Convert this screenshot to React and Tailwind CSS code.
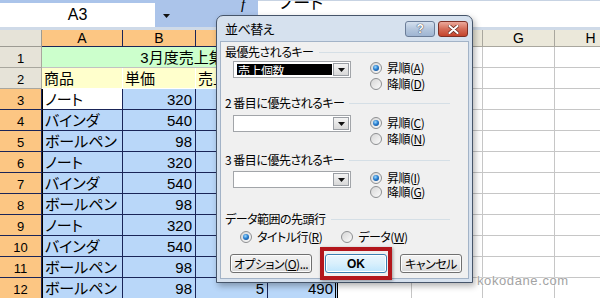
import React from "react";

const COLS = "grid-cols-[42px_81px_73px_72px_70px_74px_71px_72px_72px]";

const rows = [
    ["ノート", 320, 10],
    ["バインダ", 540, 5],
    ["ボールペン", 98, 20],
    ["ノート", 320, 8],
    ["バインダ", 540, 3],
    ["ボールペン", 98, 15],
    ["ノート", 320, 12],
    ["バインダ", 540, 6],
    ["ボールペン", 98, 10],
    ["ボールペン", 98, 5],
];

function Radio({ checked }) {
    return (
        <span className="relative inline-block w-[12px] h-[12px] shrink-0 rounded-full border border-[#8d8f91] bg-gradient-to-br from-[#d6d6d6] to-[#fbfbfb]">
            {checked && (
                <span className="absolute left-[2px] top-[2px] w-[6px] h-[6px] rounded-full bg-[radial-gradient(circle_at_40%_35%,#9fdcff_0%,#2a7fd0_45%,#0c3f80_100%)]" />
            )}
        </span>
    );
}

function RadioItem({ checked, label, hot, className = "" }) {
    return (
        <div className={`flex items-center gap-[5px] ${className}`}>
            <Radio checked={checked} />
            <span className="text-[12px] leading-[14px] whitespace-nowrap">
                {label}(<span className="underline">{hot}</span>)
            </span>
        </div>
    );
}

function Legend({ children, className = "" }) {
    return (
        <div className={`flex items-center h-[16px] mr-[18px] pl-[4px] ${className}`}>
            <span className="text-[12px] leading-[16px] whitespace-nowrap">{children}</span>
            <div className="flex-1 h-px bg-[#d5dfe6] ml-[5px]" />
        </div>
    );
}

function Combo({ value, className = "" }) {
    return (
        <div className={`flex w-[118px] h-[17px] border border-[#a2a5a9] bg-white p-px ${className}`}>
            <div className="flex-1 pl-[2px] pr-[1px] py-px">
                {value && (
                    <div className="h-full bg-black text-white text-[12px] leading-[13px] pl-px">
                        {value}
                    </div>
                )}
            </div>
            <div className="w-[16px] h-full flex items-center justify-center border border-[#9a9ea4] bg-gradient-to-b from-[#f4f4f4] to-[#d8d8d8]">
                <svg width="7" height="4" viewBox="0 0 7 4">
                    <polygon points="0,0 7,0 3.5,4" fill="#111" />
                </svg>
            </div>
        </div>
    );
}

function Btn({ children, primary, className = "" }) {
    return (
        <div
            className={`flex items-center justify-center h-[19px] rounded-[3px] border text-[12px] leading-[14px] ${
                primary
                    ? "border-[#3c7fb1] bg-gradient-to-b from-[#eaf6fd] via-[#d9f0fc] to-[#bee6fd] shadow-[inset_0_0_0_1px_#fff]"
                    : "border-[#707070] bg-gradient-to-b from-[#f2f2f2] via-[#ebebeb] to-[#d6d6d6] shadow-[inset_0_0_0_1px_#fcfcfc]"
            } ${className}`}
        >
            {children}
        </div>
    );
}

function SortDialog() {
    return (
        <div className="absolute left-[216px] top-[15px] w-[257px] h-[268px] flex flex-col rounded-t-[7px] border border-[#46556a] bg-[#d6e1ee] px-[3px] pb-[3px] shadow-[2px_3px_6px_rgba(0,0,0,0.3)] font-['Noto_Sans_CJK_JP',sans-serif] [font-feature-settings:'palt'] tracking-[-0.5px] text-black">
            {/* title bar */}
            <div className="h-[25px] flex items-start shrink-0">
                <span className="mt-[5px] ml-[5px] text-[13px] leading-[16px]">並べ替え</span>
                <div className="ml-auto mr-[1px] mt-[5px] flex gap-[3px]">
                    <div className="w-[30px] h-[16px] rounded-[3px] border border-[#6b7d98] bg-gradient-to-b from-[#d4e0ee] via-[#b4c6dd] to-[#9fb5d2] flex items-center justify-center">
                        <span className="text-white font-bold text-[12px] leading-[12px] font-['Liberation_Sans',sans-serif] [text-shadow:0_0_1px_#334,0_0_1px_#334]">?</span>
                    </div>
                    <div className="w-[30px] h-[16px] rounded-[3px] border border-[#7d3026] bg-gradient-to-b from-[#eba99b] via-[#d46c58] to-[#c4432b] flex items-center justify-center">
                        <svg width="11" height="9" viewBox="0 0 11 9">
                            <path d="M1.5 1 L9.5 8 M9.5 1 L1.5 8" stroke="#5a1d14" strokeWidth="3.4" strokeLinecap="round" />
                            <path d="M1.5 1 L9.5 8 M9.5 1 L1.5 8" stroke="#fff" strokeWidth="2.2" strokeLinecap="round" />
                        </svg>
                    </div>
                </div>
            </div>

            {/* body */}
            <div className="flex-1 border border-[#a3b3c7] bg-[#f0f0f0] pt-[2px]">
                <Legend>最優先されるキー</Legend>
                <div className="flex">
                    <Combo value="売上個数" className="ml-[12px] mt-px" />
                    <div className="ml-[19px] flex flex-col">
                        <RadioItem checked label="昇順" hot="A" className="h-[16px]" />
                        <RadioItem label="降順" hot="D" className="h-[16px]" />
                    </div>
                </div>

                <Legend className="mt-[3px]">2 番目に優先されるキー</Legend>
                <div className="flex mt-[4px]">
                    <Combo className="ml-[12px]" />
                    <div className="ml-[19px] flex flex-col">
                        <RadioItem checked label="昇順" hot="C" className="h-[16px]" />
                        <RadioItem label="降順" hot="N" className="h-[16px]" />
                    </div>
                </div>

                <Legend className="mt-[5px]">3 番目に優先されるキー</Legend>
                <div className="flex mt-[3px]">
                    <Combo className="ml-[12px]" />
                    <div className="ml-[19px] flex flex-col">
                        <RadioItem checked label="昇順" hot="I" className="h-[14px]" />
                        <RadioItem label="降順" hot="G" className="h-[14px]" />
                    </div>
                </div>

                <Legend className="mt-[12px]">データ範囲の先頭行</Legend>
                <div className="flex h-[16px] mt-[2px] pl-[19px]">
                    <RadioItem checked label="タイトル行" hot="R" />
                    <RadioItem label="データ" hot="W" className="ml-[19px]" />
                </div>

                <div className="flex mt-[9px] pl-[9px]">
                    <Btn className="w-[82px]">
                        オプション(<span className="underline">O</span>)...
                    </Btn>
                    <Btn primary className="w-[62px] ml-[13px] font-['Liberation_Sans',sans-serif] font-semibold tracking-normal">
                        OK
                    </Btn>
                    <Btn className="w-[62px] ml-[13px]">キャンセル</Btn>
                </div>
            </div>

            {/* annotation box around OK */}
            <div className="absolute left-[103px] top-[231px] w-[72px] h-[33px] border-[4px] border-[#b3161c] shadow-[1px_1px_3px_rgba(0,0,0,0.35)]" />
        </div>
    );
}

export default function App() {
    const navy = "border-[#1a2558]";
    return (
        <div className="relative w-[600px] h-[298px] overflow-hidden bg-white font-['Liberation_Sans','Noto_Sans_CJK_JP',sans-serif] text-black">
            {/* formula bar */}
            <div className="flex h-[27px] bg-[#abc4ea]">
                <div className="w-[155px] mt-[3px] bg-white flex items-center justify-center text-[16px] leading-[18px]">
                    A3
                </div>
                <div className="w-[103px] relative">
                    <svg className="absolute left-[8px] top-[14px]" width="7" height="4" viewBox="0 0 7 4">
                        <polygon points="0,0 7,0 3.5,4" fill="#111" />
                    </svg>
                    <span className="absolute left-[86px] top-[-7px] italic text-[15px] font-['Liberation_Serif',serif]">f</span>
                </div>
                <div className="flex-1 bg-white border-t border-[#c7d3e3] overflow-hidden pl-[22px]">
                    <div className="-mt-[7px] text-[17px] leading-[20px] [font-feature-settings:'palt']">ノート</div>
                </div>
            </div>
            <div className="h-[3px] bg-[#cfdae8]" />

            {/* column headers */}
            <div className={`grid ${COLS} h-[17px] text-[14px] leading-[16px]`}>
                <div className="bg-[#e6e3d8] border-r border-b border-[#9d9b93]" />
                {["A", "B", "C", "D"].map((c) => (
                    <div key={c} className={`bg-[#fcc683] border-r border-b ${navy} flex items-center justify-center`}>
                        {c}
                    </div>
                ))}
                {["E", "F", "G", "H"].map((c) => (
                    <div key={c} className="bg-[#ebe8da] border-r border-b border-[#a9a79e] flex items-center justify-center">
                        {c}
                    </div>
                ))}
            </div>

            {/* row 1 */}
            <div className={`grid ${COLS} h-[21px]`}>
                <div className="bg-[#e6e3d8] border-r border-b border-[#a9a79e] flex items-end justify-center pb-px text-[13px] leading-[15px]">1</div>
                <div className="col-span-4 bg-[#ccffcc] border-r border-b border-[#c2c2c2] flex items-center justify-center pt-[2px] text-[15px] leading-[18px] [font-feature-settings:'palt']">
                    3月度売上集計
                </div>
                {[0, 1, 2, 3].map((i) => (
                    <div key={i} className="border-r border-b border-[#c6c6c6]" />
                ))}
            </div>

            {/* row 2 */}
            <div className={`grid ${COLS} h-[21px] text-[15px] leading-[18px] [font-feature-settings:'palt']`}>
                <div className="bg-[#e6e3d8] border-r border-b border-[#a9a79e] flex items-end justify-center pb-px text-[13px] leading-[15px]">2</div>
                {["商品", "単価", "売上個数", "売上金額"].map((t) => (
                    <div key={t} className="bg-[#ffffcc] border-r border-b border-white flex items-center pl-[2px] pt-[2px] overflow-hidden whitespace-nowrap">
                        {t}
                    </div>
                ))}
                {[0, 1, 2, 3].map((i) => (
                    <div key={i} className="border-r border-b border-[#c6c6c6]" />
                ))}
            </div>

            {/* rows 3-12 */}
            {rows.map(([name, price, qty], i) => (
                <div key={i} className={`grid ${COLS} h-[21px] text-[15px] leading-[18px]`}>
                    <div className={`bg-[#fcc683] border-r border-b ${navy} flex items-end justify-center pb-px text-[13px] leading-[15px]`}>
                        {i + 3}
                    </div>
                    <div
                        className={`${i === 0 ? "bg-white" : "bg-[#b9d7f9]"} border-l border-l-black border-r border-b ${navy} flex items-center pl-[2px] pt-[2px] [font-feature-settings:'palt'] whitespace-nowrap`}
                    >
                        {name}
                    </div>
                    <div className={`bg-[#b9d7f9] border-r border-b ${navy} flex items-center justify-end pr-[3px] pt-[2px]`}>
                        {price}
                    </div>
                    <div className={`bg-[#b9d7f9] border-r border-b ${navy} flex items-center justify-end pr-[3px] pt-[2px]`}>
                        {qty}
                    </div>
                    <div className={`bg-[#b9d7f9] border-b ${navy} border-r-[3px] border-r-black border-double flex items-center justify-end pr-[2px] pt-[2px]`}>
                        {price * qty}
                    </div>
                    {[0, 1, 2, 3].map((k) => (
                        <div key={k} className="border-r border-b border-[#c6c6c6]" />
                    ))}
                </div>
            ))}

            <SortDialog />

            {/* watermark */}
            <div className="absolute left-[477px] top-[273px] text-[13px] leading-[16px] tracking-[0.6px] text-[#a3a3a3] [text-shadow:0_0_2px_#fff,0_0_2px_#fff]">
                kokodane.com
            </div>
        </div>
    );
}
